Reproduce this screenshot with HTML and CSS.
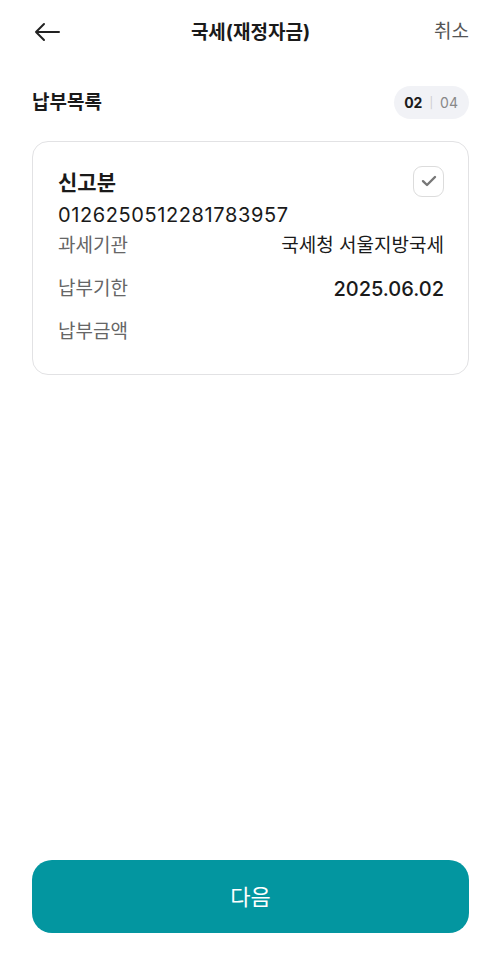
FILE: index.html
```html
<!DOCTYPE html>
<html lang="ko">
<head>
<meta charset="utf-8">
<link rel="stylesheet" href="styles.css">
</head>
<body>
<div class="page">
  <header class="topbar">
    <button class="back" aria-label="뒤로">
      <svg width="28" height="20" viewBox="0 0 28 20"><path d="M26 10H3M11 2L3 10l8 8" fill="none" stroke="#222" stroke-width="2" stroke-linecap="round" stroke-linejoin="round"/></svg>
    </button>
    <h1 class="title">국세(재정자금)</h1>
    <span class="cancel">취소</span>
  </header>

  <div class="list-head">
    <h2 class="list-title">납부목록</h2>
    <div class="badge"><span class="cur">02</span><span class="sep">|</span><span class="tot">04</span></div>
  </div>

  <div class="card">
    <div class="card-top">
      <span class="card-title">신고분</span>
      <span class="check">
        <svg width="16" height="12" viewBox="0 0 16 12"><path d="M2 6.2l4 3.8L14 2" fill="none" stroke="#777" stroke-width="2.4" stroke-linecap="round" stroke-linejoin="round"/></svg>
      </span>
    </div>
    <div class="card-num">0126250512281783957</div>
    <div class="row"><span class="label">과세기관</span><span class="value">국세청 서울지방국세</span></div>
    <div class="row"><span class="label">납부기한</span><span class="value num">2025.06.02</span></div>
    <div class="row"><span class="label">납부금액</span><span class="value"></span></div>
  </div>

  <div class="footer">
    <button class="next">다음</button>
  </div>
</div>
</body>
</html>
```

FILE: styles.css
```css
* { box-sizing: border-box; }
html, body { margin: 0; padding: 0; background: #fff; }
body {
  font-family: Inter, "Noto Sans CJK KR", sans-serif;
  color: #1a1a1a;
}
.page {
  width: 500px;
  height: 974px;
  display: flex;
  flex-direction: column;
  padding: 0 31px 0 32px;
}
.topbar {
  height: 64px;
  display: flex;
  align-items: center;
  justify-content: space-between;
  position: relative;
}
.back {
  border: 0;
  background: none;
  padding: 0;
  margin-left: 1px;
  width: 28px;
  height: 20px;
  display: flex;
}
.title {
  margin: 0;
  font-size: 19px;
  font-weight: 700;
  line-height: 26px;
  color: #1a1a1a;
  position: absolute;
  left: 50%;
  transform: translateX(-50%);
  top: 20px;
  white-space: nowrap;
}
.cancel {
  font-size: 19px;
  line-height: 26px;
  color: #555;
}
.list-head {
  margin-top: 22px;
  height: 33px;
  display: flex;
  align-items: center;
  justify-content: space-between;
}
.list-title {
  margin: 0;
  font-size: 19px;
  font-weight: 700;
  line-height: 26px;
}
.badge {
  height: 33px;
  padding: 0 11px 0 10px;
  border-radius: 17px;
  background: #f1f2f6;
  display: flex;
  align-items: center;
  font-size: 14px;
  line-height: 20px;
}
.badge .cur { font-weight: 700; color: #1a1a1a; }
.badge .sep { color: #ccc; margin: 0 7px; font-size: 11px; }
.badge .tot { color: #888; }
.card {
  margin-top: 22px;
  border: 1px solid #e2e2e4;
  border-radius: 16px;
  padding: 23px 24px 29px 25px;
}
.card-top {
  display: flex;
  align-items: center;
  justify-content: space-between;
  height: 32px;
}
.card-title {
  font-size: 21px;
  font-weight: 700;
  line-height: 28px;
  margin-top: 4px;
}
.check {
  width: 31px;
  height: 31px;
  border: 1px solid #dcdcdc;
  border-radius: 9px;
  display: flex;
  align-items: center;
  justify-content: center;
}
.card-num {
  margin-top: 4px;
  font-size: 20px;
  letter-spacing: 0.6px;
  line-height: 28px;
  color: #1a1a1a;
}
.row {
  margin-top: 4px;
  height: 26px;
  display: flex;
  align-items: center;
  justify-content: space-between;
  font-size: 19px;
  line-height: 26px;
}
.row + .row { margin-top: 17px; }
.label { color: #666; }
.value { color: #1a1a1a; }
.value.num { font-size: 20px; font-weight: 500; letter-spacing: 0; }
.footer {
  margin-top: auto;
  padding-bottom: 41px;
}
.next {
  width: 100%;
  height: 73px;
  border: 0;
  border-radius: 20px;
  background: #0396a0;
  color: #fff;
  font-family: Inter, "Noto Sans CJK KR", sans-serif;
  font-size: 22px;
  line-height: 28px;
}
```
